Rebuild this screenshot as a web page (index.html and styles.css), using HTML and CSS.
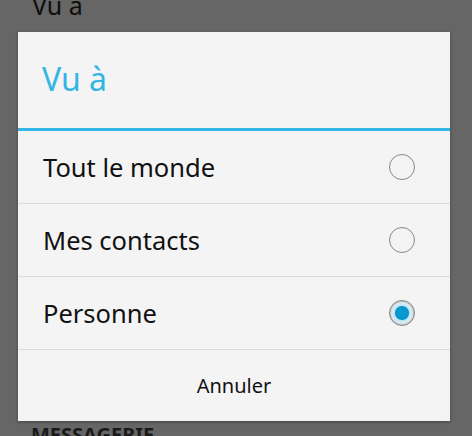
FILE: index.html
```html
<!DOCTYPE html>
<html lang="fr">
<head>
    <meta charset="UTF-8"/>
    <meta name="viewport" content="width=device-width, initial-scale=1.0"/>
    <title>Vu à</title>
    <link rel="stylesheet" href="styles.css">
</head>
<body>
<!-- page en arrière-plan, assombrie par la boîte de dialogue -->
<div class="screen">
    <div class="screen-title">Vu a</div>
    <div class="screen-section">MESSAGERIE</div>
</div>

<!-- boîte de dialogue : choix de visibilité -->
<div class="dialog">
    <header class="dialog-header">Vu à</header>
    <ul class="choice-list">
        <li class="choice">
            <span class="choice-label">Tout le monde</span>
            <span class="radio"></span>
        </li>
        <li class="choice">
            <span class="choice-label">Mes contacts</span>
            <span class="radio"></span>
        </li>
        <li class="choice">
            <span class="choice-label">Personne</span>
            <span class="radio checked"></span>
        </li>
    </ul>
    <button class="dialog-button">Annuler</button>
</div>
</body>
</html>
```

FILE: styles.css
```css
* {
    margin: 0;
    padding: 0;
    box-sizing: border-box;
}

body {
    width: 472px;
    height: 436px;
    overflow: hidden;
    background-color: #666666;
    font-family: "Noto Sans", "Open Sans", sans-serif;
    color: #111111;
    position: relative;
}

/* arrière-plan */
.screen {
    display: flex;
    flex-direction: column;
    padding-left: 32px;
}

.screen-title {
    font-size: 25px;
    line-height: 25px;
    margin-top: -7px;
    color: #0e0e0e;
}

.screen-section {
    font-size: 20px;
    line-height: 20px;
    font-weight: 700;
    color: #1a1a1a;
    margin-top: 407px;
    margin-left: -1px;
}

/* boîte de dialogue */
.dialog {
    position: absolute;
    top: 32px;
    left: 18px;
    width: 432px;
    background-color: #f4f4f4;
    box-shadow: 0 1px 3px rgba(0, 0, 0, 0.35);
    display: flex;
    flex-direction: column;
}

.dialog-header {
    height: 99px;
    display: flex;
    align-items: center;
    padding-left: 24px;
    padding-bottom: 3px;
    font-size: 32px;
    color: #33b5e5;
    border-bottom: 3px solid #33b5e5;
}

.choice-list {
    list-style: none;
}

.choice {
    height: 73px;
    display: flex;
    align-items: center;
    justify-content: space-between;
    padding: 0 35px 1px 25px;
    border-bottom: 1px solid #dadada;
}

.choice-label {
    font-size: 25.5px;
}

.radio {
    width: 26px;
    height: 26px;
    border-radius: 50%;
    border: 1.5px solid #878787;
}

.radio.checked {
    background: radial-gradient(circle, #0a9bd4 0, #0794cc 6.5px, #bfe3f3 7.5px, #d8eef8 10px, #c8c8c8 11.5px);
    border-color: #858585;
}

.dialog-button {
    height: 71px;
    border: none;
    background: transparent;
    font-family: inherit;
    font-size: 20px;
    color: #111111;
}
```
